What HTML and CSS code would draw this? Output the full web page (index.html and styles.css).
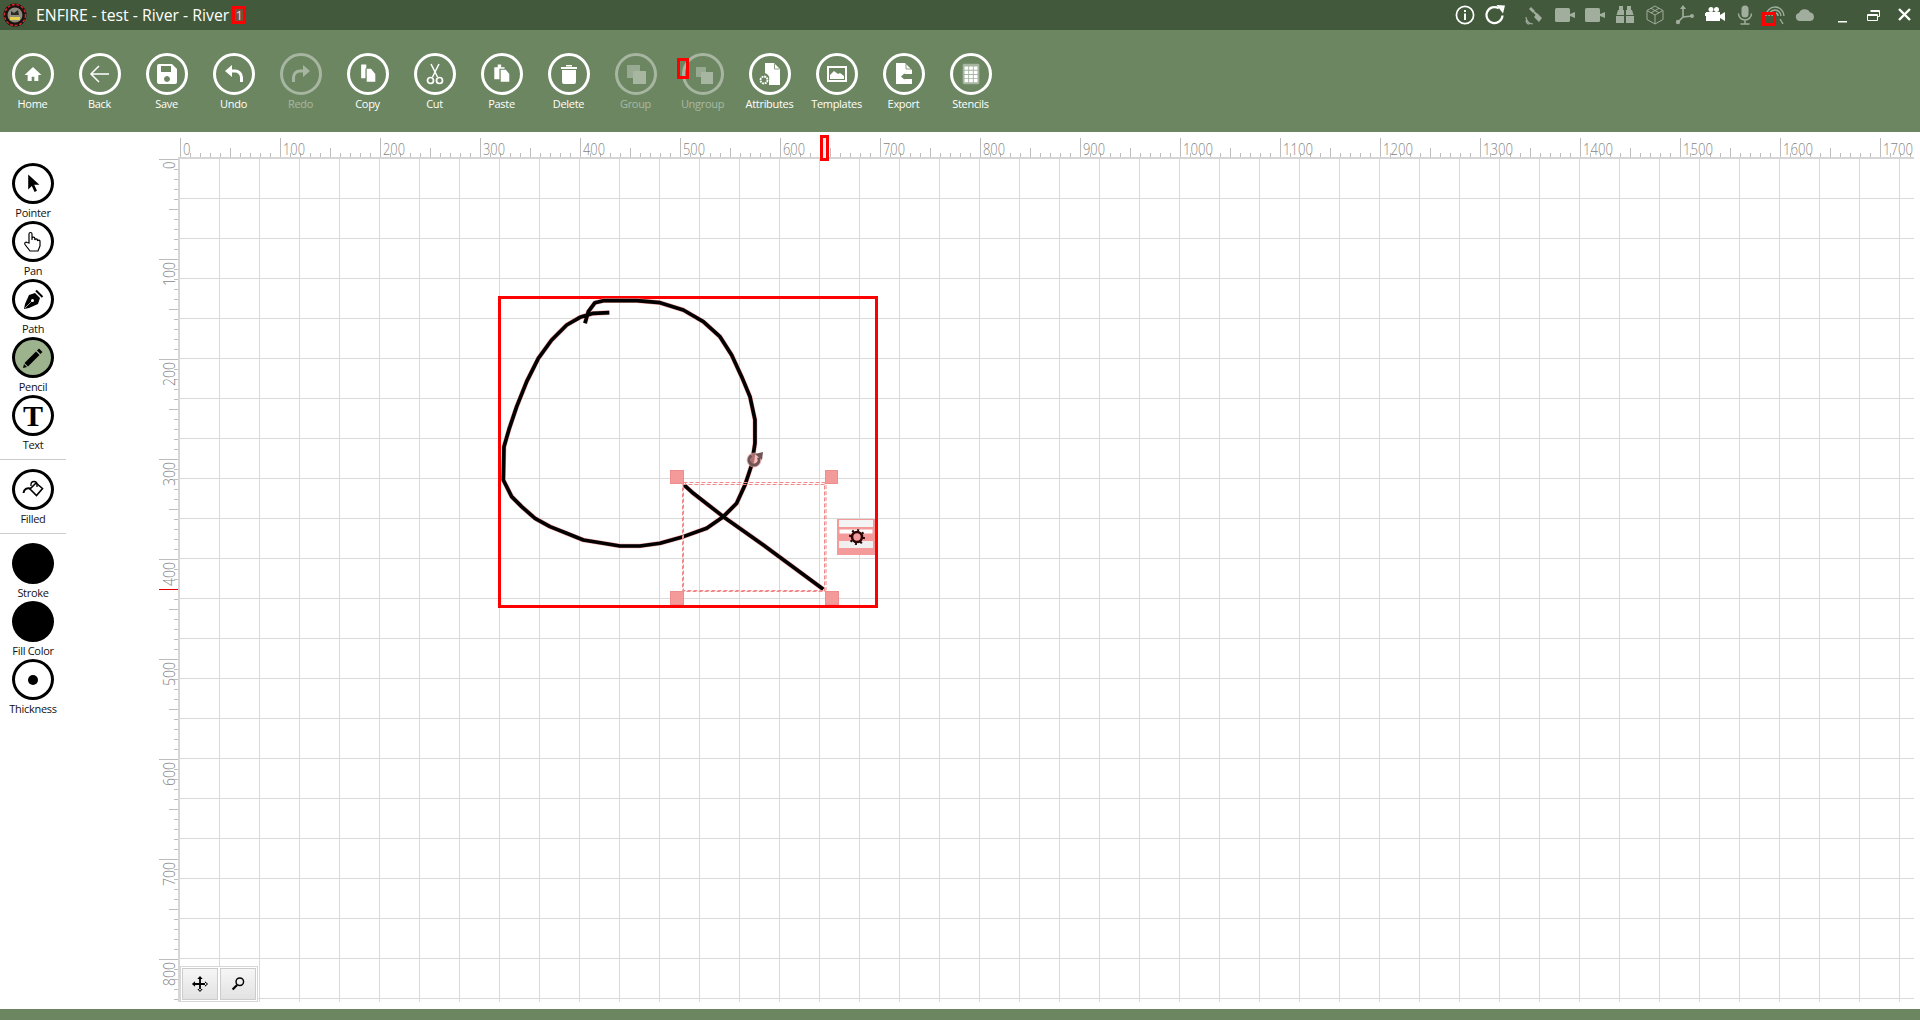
FILE: index.html
```html
<!DOCTYPE html>
<html lang="en">
<head>
  <meta charset="UTF-8" />
  <title>ENFIRE - test - River - River</title>
  <link rel="stylesheet" href="styles.css">
</head>
<body>
  <header class="titlebar">
    <svg class="logo" viewBox="0 0 24 24">
      <circle cx="12" cy="12" r="11.5" fill="#1a1210"/>
      <circle cx="12" cy="12" r="10.5" fill="none" stroke="#d8262a" stroke-width="1.4" stroke-dasharray="3 1.6"/>
      <circle cx="12" cy="12" r="7.5" fill="#8d8a7e"/>
      <path d="M7 14h10v3H7z" fill="#e6d24a"/>
      <path d="M8 8l3 2 4-3 1 5H8z" fill="#2c2a26"/>
    </svg>
    <span class="title">ENFIRE - test - River - River</span>
    <span class="title-badge">1</span>

    <div class="sys-icons">
      <!-- info, refresh -->
      <span class="sys-icon"><svg viewBox="0 0 20 20"><circle cx="10" cy="10" r="8.6" fill="none" stroke="#fff" stroke-width="1.7"/><path d="M9 8.5h2V15H9zM9 5h2v2H9z" fill="#fff"/></svg></span>
      <span class="sys-icon sys-gap"><svg viewBox="0 0 20 20"><path d="M17.500 10.500A8 8 0 1 1 13.800 3.300" fill="none" stroke="#fff" stroke-width="2.200"/><path d="M11.500 0L20 .5 18 8.500z" fill="#fff"/></svg></span>
      <!-- satellite -->
      <span class="sys-icon off"><svg viewBox="0 0 20 20"><path d="M6 2l4 4-2 2-4-4zM12 8l5 5-3 4-5-5z" fill="#fff"/><path d="M9 7l4 4" stroke="#fff" stroke-width="2"/><path d="M1 12a7 7 0 0 0 7 7M1 15.500a3.500 3.500 0 0 0 3.500 3.500" fill="none" stroke="#fff" stroke-width="1.200"/></svg></span>
      <!-- cameras -->
      <span class="sys-icon off"><svg viewBox="0 0 20 20"><rect x="0" y="3" width="15" height="14" rx="1.500" fill="#fff"/><path d="M15 9l5-2v6l-5-2z" fill="#fff"/></svg></span>
      <span class="sys-icon off"><svg viewBox="0 0 20 20"><rect x="0" y="3" width="15" height="14" rx="1.500" fill="#fff"/><path d="M15 9l5-2v6l-5-2z" fill="#fff"/></svg></span>
      <!-- binoculars -->
      <span class="sys-icon off"><svg viewBox="0 0 20 20"><path d="M4 1h4v4h1v5H1.500L3 5h1zM12 1h4v4h1l1.500 5H11V5h1zM1 11h8v7H1zM11 11h8v7h-8z" fill="#fff"/></svg></span>
      <!-- cube -->
      <span class="sys-icon off"><svg viewBox="0 0 20 20"><path d="M10 1l8 4.500v9L10 19l-8-4.500v-9zM2 5.500l8 4.500 8-4.500M10 10v9M6 3.300l8 4.500M14 3.300L6 7.800" fill="none" stroke="#fff" stroke-width="1"/></svg></span>
      <!-- axes -->
      <span class="sys-icon off"><svg viewBox="0 0 20 20"><path d="M8 3v9M8 12l9-1M8 12l-5 5" fill="none" stroke="#fff" stroke-width="1.600"/><path d="M8 0l3 4H5z" fill="#fff"/><circle cx="17" cy="11" r="2" fill="#fff"/><circle cx="3" cy="17" r="2.200" fill="#fff"/></svg></span>
      <!-- video camera, active -->
      <span class="sys-icon"><svg viewBox="0 0 20 20"><circle cx="6" cy="4.500" r="2.500" fill="#fff"/><circle cx="11.500" cy="4.500" r="2.500" fill="#fff"/><rect x="1" y="7" width="14" height="9" fill="#fff"/><path d="M15 10l5-3v9l-5-3z" fill="#fff"/><path d="M0 8h2v3H0z" fill="#fff"/></svg></span>
      <!-- mic -->
      <span class="sys-icon off"><svg viewBox="0 0 20 20"><rect x="6.500" y="0.500" width="7" height="12" rx="3.500" fill="#fff"/><path d="M3.500 8.500a6.500 6.500 0 0 0 13 0M10 15v3.500M5.500 19h9" fill="none" stroke="#fff" stroke-width="1.500"/></svg></span>
      <!-- signal, has the red marker on it -->
      <span class="sys-icon off marker-wrap"><svg viewBox="0 0 20 20"><path d="M1 11a9 9 0 0 1 18 0M4 11a6 6 0 0 1 12 0M7 11a3 3 0 0 1 6 0" fill="none" stroke="#fff" stroke-width="1.400"/><path d="M15 14l3 5" stroke="#fff" stroke-width="1.400"/></svg></span>
      <!-- cloud -->
      <span class="sys-icon off"><svg viewBox="0 0 20 20"><path d="M5 16a4 4 0 0 1-1-7.900A6 6 0 0 1 15 7.500 4.300 4.300 0 0 1 15.500 16z" fill="#fff"/></svg></span>
    </div>

    <div class="win-controls">
      <span class="win-btn"><svg viewBox="0 0 30 30"><path d="M9 21h9v1.500H9z" fill="#fff"/></svg></span>
      <span class="win-btn"><svg viewBox="0 0 30 30"><path d="M11.500 10.500h9v6h-2M8.500 14.500h10v6h-10zM8.500 15.500h10M11.500 11.500h9" fill="none" stroke="#fff" stroke-width="1"/></svg></span>
      <span class="win-btn"><svg viewBox="0 0 30 30"><path d="M9 9l11 11M20 9L9 20" stroke="#fff" stroke-width="2.400"/></svg></span>
    </div>
  </header>

  <nav class="toolbar">
    <div class="tool">
      <span class="circle"><svg viewBox="-1.500 -1.500 27 27"><path d="M12 4L2.500 13H6v7h4.500v-5h3v5H18v-7h3.500z" fill="#fff"/></svg></span>
      <label>Home</label>
    </div>
    <div class="tool">
      <span class="circle"><svg viewBox="0 0 24 24"><path d="M21 12H3M11 4l-8 8 8 8" fill="none" stroke="#fff" stroke-width="1.500"/></svg></span>
      <label>Back</label>
    </div>
    <div class="tool">
      <span class="circle"><svg viewBox="0 0 24 24"><path fill-rule="evenodd" d="M4 2h13l5 5v13a2 2 0 0 1-2 2H4a2 2 0 0 1-2-2V4a2 2 0 0 1 2-2zM6 4v6h10V4zM12 14a3 3 0 1 0 .01 0z" fill="#fff"/></svg></span>
      <label>Save</label>
    </div>
    <div class="tool">
      <span class="circle"><svg viewBox="0 0 24 24"><path d="M8 9h5a6.500 6.500 0 0 1 6.500 6.500V20" fill="none" stroke="#fff" stroke-width="3"/><path d="M3 9l7-6v12z" fill="#fff"/></svg></span>
      <label>Undo</label>
    </div>
    <div class="tool off">
      <span class="circle"><svg viewBox="0 0 24 24"><path d="M16 9h-5a6.500 6.500 0 0 0-6.500 6.500V20" fill="none" stroke="#fff" stroke-width="3"/><path d="M21 9l-7-6v12z" fill="#fff"/></svg></span>
      <label>Redo</label>
    </div>
    <div class="tool">
      <span class="circle"><svg viewBox="-2 -1 28 28"><path d="M4 2h6v4L9 7v11H4z" fill="#fff"/><path d="M10.500 7h5l5 6v9h-10z" fill="#fff"/></svg></span>
      <label>Copy</label>
    </div>
    <div class="tool">
      <span class="circle"><svg viewBox="0 0 24 24"><path d="M8 2l6.500 13M16 2L9.500 15" fill="none" stroke="#fff" stroke-width="1.500"/><circle cx="7.500" cy="18.500" r="3" fill="none" stroke="#fff" stroke-width="1.700"/><circle cx="16.500" cy="18.500" r="3" fill="none" stroke="#fff" stroke-width="1.700"/></svg></span>
      <label>Cut</label>
    </div>
    <div class="tool">
      <span class="circle"><svg viewBox="-2 -1 28 28"><path d="M3 5h4V2h4v3h4v2H9v12H3z" fill="#fff"/><path d="M10.500 8h6l4 5v9h-10z" fill="#fff"/></svg></span>
      <label>Paste</label>
    </div>
    <div class="tool">
      <span class="circle"><svg viewBox="0 0 24 24"><path d="M4 5h16v2H4zM5 8h14v12a2 2 0 0 1-2 2H7a2 2 0 0 1-2-2zM9 3h6v1.500H9z" fill="#fff"/></svg></span>
      <label>Delete</label>
    </div>
    <div class="tool off">
      <span class="circle"><svg viewBox="0 0 24 24"><path d="M3 3h13v13H3z" fill="#fff" opacity=".75"/><path d="M9 9h13v13H9z" fill="#fff"/></svg></span>
      <label>Group</label>
    </div>
    <div class="tool off marker-wrap">
      <span class="circle"><svg viewBox="0 0 24 24"><path d="M5 5h10v10H5z" fill="#fff" opacity=".75"/><path d="M10 10h12v12H10z" fill="#fff"/></svg></span>
      <label>Ungroup</label>
    </div>
    <div class="tool">
      <span class="circle"><svg viewBox="0 0 24 24"><path d="M7 1h9l6 6v16H11v-4a6 6 0 0 0-4-8z" fill="#fff"/><path d="M16.500 1.500V7h5" fill="none" stroke="#6c8662" stroke-width=".8"/><circle cx="6" cy="18" r="3.500" fill="none" stroke="#fff" stroke-width="1.800" stroke-dasharray="2 .7"/></svg></span>
      <label>Attributes</label>
    </div>
    <div class="tool">
      <span class="circle"><svg viewBox="0 0 24 24"><path fill-rule="evenodd" d="M2 4h20v16H2zM4 6v12h16V6z" fill="#fff"/><path d="M5 17v-4l4-4 4 3 2-1 4 3v3z" fill="#fff"/></svg></span>
      <label>Templates</label>
    </div>
    <div class="tool">
      <span class="circle"><svg viewBox="0 0 24 24"><path d="M4 1h9l7 7v4h-8l3-3-6 5.500 6 5.500-3-3h8v5H4z" fill="#fff"/><path d="M14 1.500V7h5.500" fill="none" stroke="#6c8662" stroke-width=".8"/></svg></span>
      <label>Export</label>
    </div>
    <div class="tool">
      <span class="circle"><svg viewBox="-1 -1 26 26"><rect x="3" y="1" width="18" height="22" rx="1.500" fill="#fff" opacity=".4"/><path d="M5 4h4v3.500H5zM10 4h4v3.500h-4zM15 4h4v3.500h-4zM5 8.500h4V12H5zM10 8.500h4V12h-4zM15 8.500h4V12h-4zM5 13h4v3.500H5zM10 13h4v3.500h-4zM15 13h4v3.500h-4zM5 17.500h4V21H5zM10 17.500h4V21h-4zM15 17.500h4V21h-4z" fill="#fff"/></svg></span>
      <label>Stencils</label>
    </div>
  </nav>

  <main class="workspace">
    <aside class="sidebar">
      <div class="tool dark">
        <span class="circle"><svg viewBox="-3 -2 30 30"><path d="M6 1l14 13h-6.500l3.500 7.500-3 1.500-3.500-7.500L6 20z" fill="#000"/></svg></span>
        <label>Pointer</label>
      </div>
      <div class="tool dark">
        <span class="circle"><svg viewBox="0 0 24 24"><path d="M8 13V4a1.500 1.500 0 0 1 3 0v6-1.500a1.400 1.400 0 0 1 2.800 0V10a1.400 1.400 0 0 1 2.700 0v1a1.300 1.300 0 0 1 2.500 0v5l-2 5H9l-5-6.500c-1-2 1-3 2-2z" fill="#fff" stroke="#000" stroke-width="1.200"/></svg></span>
        <label>Pan</label>
      </div>
      <div class="tool dark">
        <span class="circle"><svg viewBox="0 0 24 24"><path d="M14 5l5 5-2 6-9 4-5 1 1-5 4-9z" fill="#000"/><path d="M15 2.500l6.500 6.500" stroke="#000" stroke-width="2"/><circle cx="11.500" cy="12.500" r="1.500" fill="#fff"/><path d="M11 13l-7 7" stroke="#fff" stroke-width=".6"/></svg></span>
        <label>Path</label>
      </div>
      <div class="tool dark active">
        <span class="circle"><svg viewBox="0 0 24 24"><path d="M18 2.500l3.500 3.500-2 2L16 4.500zM15 5.500L18.500 9 7 20.500 3.500 17zM3 18l3 3-4 1z" fill="#000"/></svg></span>
        <label>Pencil</label>
      </div>
      <div class="tool dark">
        <span class="circle text-icon">T</span>
        <label>Text</label>
      </div>
      <div class="sep"></div>
      <div class="tool dark">
        <span class="circle"><svg viewBox="0 0 24 24"><path d="M9 11l6-6 6.500 5.500-6 7z" fill="#fff" stroke="#000" stroke-width="1.600"/><path d="M10 8V6.500a3 3 0 0 1 6 0V9" fill="none" stroke="#000" stroke-width="1.300"/><path d="M9.500 10.500C6 9.500 3 11 2.500 15" fill="none" stroke="#000" stroke-width="2"/></svg></span>
        <label>Filled</label>
      </div>
      <div class="sep"></div>
      <div class="tool dark">
        <span class="circle solid"></span>
        <label>Stroke</label>
      </div>
      <div class="tool dark">
        <span class="circle solid"></span>
        <label>Fill Color</label>
      </div>
      <div class="tool dark">
        <span class="circle"><svg viewBox="0 0 24 24"><circle cx="12" cy="12" r="5" fill="#000"/></svg></span>
        <label>Thickness</label>
      </div>
    </aside>

    <svg class="canvas" viewBox="150 132 1770 877" width="1770" height="877">
      <defs>
        <pattern id="grid" patternUnits="userSpaceOnUse" x="179" y="158" width="40" height="40">
          <path d="M.5 0v40M0 .5h40" fill="none" stroke="#dadada"/>
        </pattern>
        <pattern id="ticks-x" patternUnits="userSpaceOnUse" x="180" y="138" width="100" height="19">
          <path d="M.5 0v19M10.500 15v4M20.500 15v4M30.500 15v4M40.500 15v4M50.500 10v9M60.500 15v4M70.500 15v4M80.500 15v4M90.500 15v4" stroke="#bdbdbd"/>
        </pattern>
        <pattern id="ticks-y" patternUnits="userSpaceOnUse" x="159" y="159" width="19" height="100">
          <path d="M0 .5h19M15 10.500h4M15 20.500h4M15 30.500h4M15 40.500h4M10 50.500h9M15 60.500h4M15 70.500h4M15 80.500h4M15 90.500h4" stroke="#bdbdbd"/>
        </pattern>
      </defs>

      <rect x="179" y="158" width="1735" height="844" fill="url(#grid)"/>
      <rect x="180" y="138" width="1734" height="19" fill="url(#ticks-x)"/>
      <rect x="159" y="159" width="19" height="843" fill="url(#ticks-y)"/>
      <path d="M178 157h1736v2H180v843h-2z" fill="#d6d6d6"/>

      <g class="ruler-num">
        <text x="183" y="155" textLength="7.500" lengthAdjust="spacingAndGlyphs">0</text>
        <text x="283" y="155" textLength="22" lengthAdjust="spacingAndGlyphs">100</text>
        <text x="383" y="155" textLength="22" lengthAdjust="spacingAndGlyphs">200</text>
        <text x="483" y="155" textLength="22" lengthAdjust="spacingAndGlyphs">300</text>
        <text x="583" y="155" textLength="22" lengthAdjust="spacingAndGlyphs">400</text>
        <text x="683" y="155" textLength="22" lengthAdjust="spacingAndGlyphs">500</text>
        <text x="783" y="155" textLength="22" lengthAdjust="spacingAndGlyphs">600</text>
        <text x="883" y="155" textLength="22" lengthAdjust="spacingAndGlyphs">700</text>
        <text x="983" y="155" textLength="22" lengthAdjust="spacingAndGlyphs">800</text>
        <text x="1083" y="155" textLength="22" lengthAdjust="spacingAndGlyphs">900</text>
        <text x="1183" y="155" textLength="30" lengthAdjust="spacingAndGlyphs">1000</text>
        <text x="1283" y="155" textLength="30" lengthAdjust="spacingAndGlyphs">1100</text>
        <text x="1383" y="155" textLength="30" lengthAdjust="spacingAndGlyphs">1200</text>
        <text x="1483" y="155" textLength="30" lengthAdjust="spacingAndGlyphs">1300</text>
        <text x="1583" y="155" textLength="30" lengthAdjust="spacingAndGlyphs">1400</text>
        <text x="1683" y="155" textLength="30" lengthAdjust="spacingAndGlyphs">1500</text>
        <text x="1783" y="155" textLength="30" lengthAdjust="spacingAndGlyphs">1600</text>
        <text x="1883" y="155" textLength="30" lengthAdjust="spacingAndGlyphs">1700</text>
      </g>
      <g class="ruler-num">
        <text transform="translate(175 169) rotate(-90)" textLength="7.500" lengthAdjust="spacingAndGlyphs">0</text>
        <text transform="translate(175 286) rotate(-90)" textLength="24" lengthAdjust="spacingAndGlyphs">100</text>
        <text transform="translate(175 386) rotate(-90)" textLength="24" lengthAdjust="spacingAndGlyphs">200</text>
        <text transform="translate(175 486) rotate(-90)" textLength="24" lengthAdjust="spacingAndGlyphs">300</text>
        <text transform="translate(175 586) rotate(-90)" textLength="24" lengthAdjust="spacingAndGlyphs">400</text>
        <text transform="translate(175 686) rotate(-90)" textLength="24" lengthAdjust="spacingAndGlyphs">500</text>
        <text transform="translate(175 786) rotate(-90)" textLength="24" lengthAdjust="spacingAndGlyphs">600</text>
        <text transform="translate(175 886) rotate(-90)" textLength="24" lengthAdjust="spacingAndGlyphs">700</text>
        <text transform="translate(175 986) rotate(-90)" textLength="24" lengthAdjust="spacingAndGlyphs">800</text>
      </g>

      <!-- cursor position on the rulers -->
      <path d="M159 589.500h19" stroke="#e00000"/>
      <rect x="821.500" y="136.500" width="6" height="23" fill="#eee" stroke="#f00" stroke-width="3"/>

      <!-- drawn shape with selection -->
      <rect x="499.500" y="297.500" width="377" height="309" fill="none" stroke="#f00" stroke-width="3"/>

      <g transform="translate(480 280) scale(.3333)" fill="none" stroke-linejoin="round">
        <path class="halo" d="M388 98L340 100 300 112 260 135 215 180 175 235 140 305 110 380 88 445 72 500 70 600 95 650 125 680 165 715 210 740 260 760 310 780 370 790 420 798 480 798 540 790 610 770 680 745 730 710 770 670 795 615 815 555 825 490 825 420 810 350 785 290 755 225 720 170 670 125 610 90 540 68 470 62 370 62 345 68 325 95 315 130M612 615L640 640 730 710 850 795 1030 928"/>
        <path class="ink" d="M388 98L340 100 300 112 260 135 215 180 175 235 140 305 110 380 88 445 72 500 70 600 95 650 125 680 165 715 210 740 260 760 310 780 370 790 420 798 480 798 540 790 610 770 680 745 730 710 770 670 795 615 815 555 825 490 825 420 810 350 785 290 755 225 720 170 670 125 610 90 540 68 470 62 370 62 345 68 325 95 315 130M612 615L640 640 730 710 850 795 1030 928"/>
      </g>

      <g class="selection">
        <rect x="683.500" y="482.500" width="141" height="109"/>
        <rect x="682.500" y="484.500" width="143.500" height="106"/>
      </g>
      <g fill="#f49a9a" stroke="#ee8d8d">
        <rect x="670.500" y="470.500" width="13" height="13"/>
        <rect x="825.500" y="470.500" width="12" height="13"/>
        <rect x="670.500" y="591.500" width="13" height="13"/>
        <rect x="825.500" y="591.500" width="13" height="13"/>
      </g>

      <!-- rotate handle -->
      <circle cx="754" cy="460" r="7.500" fill="#f4a3a3" opacity=".7"/>
      <circle cx="754" cy="460" r="5" fill="none" stroke="#6e5555" stroke-width="3" stroke-dasharray="23 8" transform="rotate(-30 754 460)"/>
      <path d="M755 454l8-2-1 8z" fill="#6e5555"/>

      <!-- attributes handle -->
      <rect x="837" y="519" width="38" height="36" fill="#f49a9a"/>
      <rect x="839" y="520" width="34" height="7" fill="#f4f4f4"/>
      <rect x="839" y="529" width="34" height="5" fill="#fff" stroke="#f49a9a"/>
      <rect x="839" y="541" width="34" height="7" fill="#f0f0f0"/>
      <circle cx="857" cy="537" r="5" fill="#f49a9a" stroke="#2b0505" stroke-width="2.600"/>
      <circle cx="857" cy="537" r="7" fill="none" stroke="#2b0505" stroke-width="2" stroke-dasharray="2 3.500"/>
    </svg>

    <div class="canvas-tools">
      <button class="canvas-btn"><svg viewBox="0 0 20 20"><path d="M10 1l3 3.500H7zM10 19l3-3.500H7zM1 10l3.500-3v6zM19 10l-3.500-3v6zM9 3h2v14H9zM3 9h14v2H3z" fill="#000"/></svg></button>
      <button class="canvas-btn"><svg viewBox="0 0 20 20"><circle cx="12" cy="7.500" r="4.200" fill="none" stroke="#000" stroke-width="1.600"/><path d="M9 11l-5 5" stroke="#000" stroke-width="2.400"/></svg></button>
    </div>
  </main>

  <footer class="statusbar"></footer>
</body>
</html>
```

FILE: styles.css
```css
* {
  box-sizing: border-box;
}
html, body {
  margin: 0;
  height: 1020px;
  overflow: hidden;
}
body {
  font-family: "Open Sans", "Noto Sans", sans-serif;
  background: #fff;
  display: flex;
  flex-direction: column;
}

/* title bar */
.titlebar {
  height: 30px;
  background: #425a3b;
  color: #fff;
  display: flex;
  align-items: center;
}
.logo {
  width: 24px;
  height: 24px;
  margin-left: 3px;
}
.title {
  margin-left: 9px;
  font-size: 15.800px;
}
.title-badge {
  width: 14px;
  height: 18px;
  margin-left: 3px;
  border: 3px solid #f00;
  background: #75503f;
  color: #ddd;
  font-size: 13px;
  line-height: 12px;
  text-align: center;
}
.sys-icons {
  display: flex;
  margin-left: auto;
}
.sys-icon {
  width: 30px;
  height: 30px;
  display: flex;
  align-items: center;
  justify-content: center;
}
.sys-icon svg {
  width: 20px;
  height: 20px;
}
.sys-icon.off svg {
  opacity: .5;
}
.sys-gap {
  margin-right: 10px;
}
.win-controls {
  display: flex;
  margin-left: 9px;
}
.win-btn {
  width: 30.500px;
  height: 30px;
}
.win-btn svg {
  width: 30px;
  height: 30px;
  display: block;
}
.marker-wrap {
  position: relative;
}
.sys-icon.marker-wrap::after {
  content: "";
  box-sizing: border-box;
  position: absolute;
  left: 2px;
  top: 12px;
  width: 14px;
  height: 14px;
  border: 3px solid #f00;
}

/* toolbar */
.toolbar {
  height: 102px;
  background: #6c8662;
  display: flex;
  padding-top: 23px;
}
.toolbar .tool:first-child {
  margin-left: -1px;
}
.tool {
  width: 67px;
  display: flex;
  flex-direction: column;
  align-items: center;
  color: #fff;
}
.tool label {
  font-size: 11px;
  letter-spacing: -.3px;
  line-height: 16px;
  margin-top: 1px;
  white-space: nowrap;
}
.tool .circle {
  width: 42px;
  height: 42px;
  border: 3.500px solid #fff;
  border-radius: 50%;
  display: flex;
  align-items: center;
  justify-content: center;
}
.tool .circle svg {
  width: 24px;
  height: 24px;
}
.tool.off > * {
  opacity: .4;
}
.toolbar .marker-wrap::after {
  content: "";
  box-sizing: border-box;
  position: absolute;
  left: 8px;
  top: 5px;
  width: 12px;
  height: 21px;
  border: 3px solid #f00;
}

/* left tools and canvas */
.workspace {
  height: 877px;
  display: flex;
  position: relative;
}
.sidebar {
  width: 150px;
  padding-top: 31px;
}
.sidebar .tool {
  width: 66px;
  height: 58px;
}
.tool.dark {
  color: #111;
}
.tool.dark .circle {
  border-color: #000;
}
.tool.active .circle {
  background: #9db38e;
}
.tool .circle.solid {
  background: #000;
}
.tool .text-icon {
  font-family: "Liberation Serif", serif;
  font-weight: bold;
  font-size: 30px;
  line-height: 1;
  color: #000;
}
.sep {
  height: 1px;
  background: #ccc;
  width: 66px;
  margin: 6px 0 9px;
}
.canvas {
  display: block;
  flex: none;
}
.ruler-num text {
  font-family: "Open Sans", sans-serif;
  font-weight: 300;
  font-size: 17px;
  fill: #858585;
}
.halo {
  stroke: #f7a0a0;
  stroke-width: 14;
}
.ink {
  stroke: #000;
  stroke-width: 11;
}
.selection rect {
  fill: none;
  stroke: #f08a8a;
  stroke-dasharray: 4 2;
}
.canvas-tools {
  position: absolute;
  left: 180px;
  top: 834px;
  width: 78px;
  height: 36px;
  padding: 1px;
  border: 1px solid #d6d6d6;
  background: #fff;
  display: flex;
  gap: 2px;
}
.canvas-btn {
  width: 36px;
  height: 32px;
  padding: 0;
  border: 1px solid #ccc;
  background: linear-gradient(#f6f6f6, #e2e2e2);
  display: flex;
  align-items: center;
  justify-content: center;
}
.canvas-btn svg {
  width: 18px;
  height: 18px;
}
.statusbar {
  height: 11px;
  background: #6c8662;
}
```
